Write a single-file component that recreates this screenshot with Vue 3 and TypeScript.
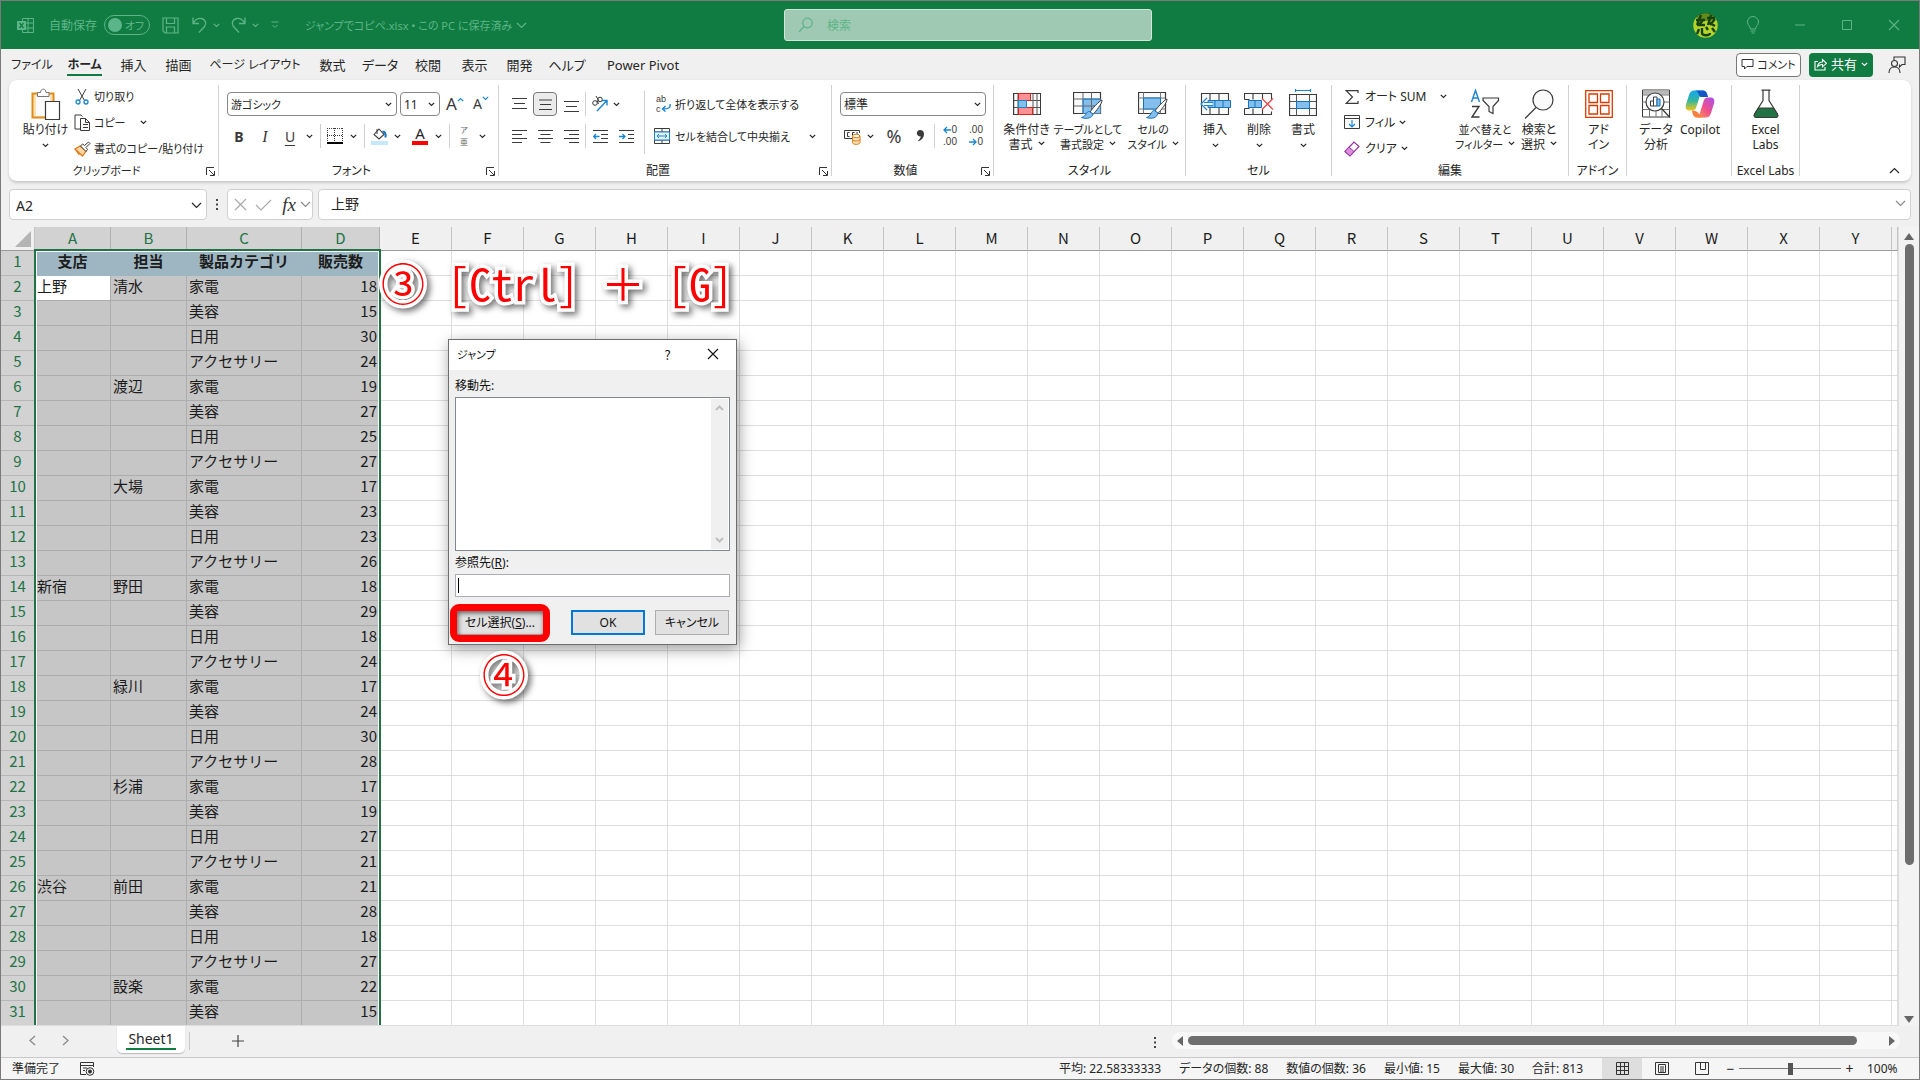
<script setup lang="ts">
import { h, ref } from 'vue'

type Glyph = [number, number, string]

const K = '#3b3a39'
const B = '#1a86d0'

const glyphs: Record<string, Glyph> = {
  excel: [17, 17, `<g fill="none" stroke="currentColor"><path d="M5.500 4V1.500h11v14h-11V13M11 1.500v14M5.500 6h11M9 11h7.500"/></g><rect y="4" width="9" height="9" fill="currentColor"/><path d="M2.500 6l4 5M6.500 6l-4 5" stroke="#107c41" stroke-width="1.300"/>`],
  save: [17, 17, `<g fill="none" stroke="currentColor" stroke-width="1.200"><path d="M1 1h15v15H3l-2-2z"/><path d="M4.500 1v5.500h8V1M4.500 16v-6h8v6"/></g>`],
  undo: [17, 18, `<path d="M2 1.500v6h6M2.200 7.200C4 4 7 2 10.500 2.500c4 .8 5.500 5 3 8L8 16.500" fill="none" stroke="currentColor" stroke-width="1.300"/>`],
  redo: [17, 18, `<path d="M15 1.500v6H9M14.800 7.200C13 4 10 2 6.500 2.500c-4 .8-5.500 5-3 8L9 16.500" fill="none" stroke="currentColor" stroke-width="1.300"/>`],
  custom: [8, 8, `<path d="M.5 1h7" stroke="currentColor"/><path d="M1.500 4L4 6.500 6.500 4" fill="none" stroke="currentColor"/>`],
  chev: [7, 5, `<path d="M.8.8L3.500 3.500 6.200.8" fill="none" stroke="currentColor" stroke-width="1.200"/>`],
  chevL: [11, 7, `<path d="M1 1l4.500 4.500L10 1" fill="none" stroke="currentColor" stroke-width="1.200"/>`],
  up: [11, 7, `<path d="M1 6l4.500-4.500L10 6" fill="none" stroke="currentColor" stroke-width="1.200"/>`],
  lens: [16, 16, `<g fill="none" stroke="currentColor" stroke-width="1.200"><circle cx="9.500" cy="6" r="4.800"/><path d="M6 9.500L1 15"/></g>`],
  bulb: [14, 18, `<g fill="none" stroke="currentColor"><path d="M4.500 13c0-3-3-3.500-3-7a5.500 5.500 0 0 1 11 0c0 3.500-3 4-3 7zM4.500 15h5M5.500 17h3"/></g>`],
  min: [12, 12, `<path d="M1 6h10" stroke="currentColor"/>`],
  max: [12, 12, `<path d="M1.500 1.500h9v9h-9z" fill="none" stroke="currentColor"/>`],
  close: [12, 12, `<path d="M1 1l10 10M11 1L1 11" stroke="currentColor" stroke-width="1.100"/>`],
  avatar: [25, 25, `<circle cx="12.500" cy="12.500" r="12.200" fill="#b4d42a"/><path d="M3 4a12.200 12.200 0 0 1 19 0l-4 4H7z" fill="#16420f" opacity=".5"/><g stroke="#16420f" stroke-width="2.400" fill="none"><path d="M3 7h9M8 2L4 12M4 12h8M11 6l-5 6M14 5h8M18 2l-3 10M15 9l7 4M22 6l-5 6M6 16l-2 5M9 15v5c0 3 8 3 8 0M13 14l2 3M19 15l3 4"/></g>`],
  comment: [13, 13, `<path d="M1 1.500h11v7H6L3.500 11V8.500H1z" fill="none" stroke="#333"/>`],
  share: [13, 13, `<g fill="none" stroke="#fff" stroke-width="1.100"><path d="M4 3.500H1v8.500h10V9"/><path d="M3.500 8.500C4 5.500 6 4 8.500 4V1.500l4 3.800-4 3.500V6.500C6.500 6.500 5 7 3.500 8.500z"/></g>`],
  person: [18, 18, `<g fill="none" stroke="#333" stroke-width="1.100"><path d="M6 4V1h11v7.500h-3L11.500 11V8.500"/><circle cx="6.500" cy="7.500" r="3"/><path d="M1 17c0-4 2-6 5.500-6s5.500 2 5.500 6"/></g>`],
  paste: [30, 32, `<path d="M1.500 5.500h21v24h-21z" fill="#fce3b4" stroke="#e08b1d" stroke-width="2"/><path d="M5 8h14v20H5z" fill="#fbfbfb"/><path d="M6.500 8.500V4.500h3C9.500 0 15 0 15 4.500h3v4z" fill="#fff" stroke="#777"/><path d="M14.500 13.500h14v18h-14z" fill="#fff" stroke="${K}" stroke-width="1.200"/>`],
  cut: [14, 16, `<path d="M3 0l6.500 11.500M11 0L4.500 11.500" stroke="${K}" fill="none"/><g fill="none" stroke="${B}" stroke-width="1.300"><circle cx="3" cy="13" r="2"/><circle cx="11" cy="13" r="2"/></g>`],
  copy: [17, 17, `<path d="M6 15H1V1h6l1.500 1.500" fill="none" stroke="${K}"/><path d="M6.500 4.500h5l4 4v8h-9zM11.500 4.500v4h4M9 10.500h5M9 13.500h5" fill="#fff" stroke="${K}"/>`],
  brush: [17, 16, `<path d="M1 8l5-3 6 5-3.500 5z" fill="#fbd6a4" stroke="#e07b17" stroke-width="1.300"/><path d="M3 10l3.500 4M1 8l4 6" stroke="#e07b17"/><path d="M6.500 5l2-2 2 1.500L14.500 1l1.500 1.500-4 4 1.500 2-1.500 2z" fill="#fff" stroke="${K}"/>`],
  launch: [9, 9, `<path d="M.5 8V.5H8M3 3l5 5M8.500 4v4.500H4" fill="none" stroke="#333"/>`],
  borders: [16, 16, `<g stroke="${K}" stroke-dasharray="1 1" fill="none"><path d="M0 .5h16M0 7.500h16M.5 0v14M7.500 0v14M15.500 0v14"/></g><path d="M0 15h16" stroke="#000" stroke-width="2"/>`],
  fill: [17, 17, `<path d="M3 6.500L8 1l5 5.500L8 11z" fill="#fff" stroke="${K}" stroke-width="1.100"/><path d="M6 1v5" stroke="${K}"/><path d="M11.500 3.500c2.500 0 3.500 2 3 6" stroke="#1573bd" stroke-width="2" fill="none"/><rect y="13" width="17" height="4" fill="#c5e9fb"/>`],
  alignTop: [15, 15, `<path d="M0 1.500h15M2 6.500h11M0 11.500h15" stroke="${K}"/>`],
  alignMid: [15, 15, `<path d="M1 3h13M2 7.500h11M1 12.500h13" stroke="${K}"/>`],
  alignBot: [15, 15, `<path d="M0 4.500h15M2 9.500h11M0 14.500h15" stroke="${K}"/>`],
  left: [15, 15, `<path d="M0 1.500h15M0 5.500h10M0 9.500h15M0 13.500h10" stroke="${K}"/>`],
  center: [15, 15, `<path d="M0 1.500h15M2.500 5.500h10M0 9.500h15M2.500 13.500h10" stroke="${K}"/>`],
  right: [15, 15, `<path d="M0 1.500h15M5 5.500h10M0 9.500h15M5 13.500h10" stroke="${K}"/>`],
  outdent: [15, 15, `<path d="M0 1.500h15M8 5.500h7M8 9.500h7M0 13.500h15" stroke="${K}"/><path d="M6.500 7.500h-6M3 5L.7 7.500 3 10" stroke="${B}" fill="none" stroke-width="1.300"/>`],
  indent: [15, 15, `<path d="M0 1.500h15M9 5.500h6M9 9.500h6M0 13.500h15" stroke="${K}"/><path d="M0 7.500h6M3.500 5L6 7.500 3.500 10" stroke="${B}" fill="none" stroke-width="1.300"/>`],
  orient: [18, 16, `<g fill="none" stroke="${K}"><circle cx="4" cy="7" r="2.300"/><path d="M6 4.500l1.500 3.500"/><circle cx="9" cy="3.500" r="2.300"/><path d="M5 0l3 5"/></g><path d="M6 15L15.500 5M11 4.500h5v5" stroke="${B}" stroke-width="1.400" fill="none"/>`],
  wrapArrow: [10, 8, `<path d="M9 0c1 4-2 5-7 5M4.500 2L1.500 5l3 2.500" stroke="${B}" stroke-width="1.400" fill="none"/>`],
  merge: [16, 16, `<path d="M.5.500h15v15H.5zM.5 4h15M.5 12h15M8 .5V4M8 12v3.500" fill="none" stroke="${K}"/><path d="M.5 4h15v8H.5z" fill="#e6f3fc" stroke="${B}"/><path d="M3 8h10M5 6L3 8l2 2M11 6l2 2-2 2" fill="none" stroke="${B}"/>`],
  money: [17, 17, `<path d="M9 10.500H.5v-8h15V5" fill="none" stroke="${K}"/><path d="M5.500 4.500h-2v4h2M8.500 8V4.500h2M13 4v2" fill="none" stroke="${K}"/><path d="M8.500 8v6.500c0 2.500 7.500 2.500 7.500 0V8z" fill="#fbe0bd" stroke="#e07b17"/><ellipse cx="12.250" cy="8" rx="3.700" ry="1.700" fill="#fff" stroke="#e07b17"/><path d="M8.500 11.500c0 2 7.500 2 7.500 0" fill="none" stroke="#e07b17"/>`],
  comma: [9, 14, `<path d="M4 1a3.200 3.200 0 1 0 .8 6.300C4.500 9.500 3 11 1.500 12.500 5.500 11.500 8 8.500 8 5 8 2.500 6.500 1 4 1z" fill="${K}"/>`],
  arrL: [8, 8, `<path d="M8 4H1M4 1L1 4l3 3" fill="none" stroke="${B}" stroke-width="1.300"/>`],
  arrR: [8, 8, `<path d="M0 4h7M4 1l3 3-3 3" fill="none" stroke="${B}" stroke-width="1.300"/>`],
  cond: [28, 28, `<path d="M.5 3.500h27v21H.5zM.5 10.500h27M.5 17.500h27M5 3.500v21M20 3.500v21M24 3.500v21" fill="#fafafa" stroke="#555"/><path d="M.6 3.500v21h27v-21z" fill="none" stroke="${K}" stroke-width="1.200"/><path d="M5.500 3.500h12v7h-12zM5.500 17.500h14v7h-14z" fill="#ff9094" stroke="#e0201b"/><path d="M5.500 10.500h8v7h-8z" fill="#83beec" stroke="${B}"/>`],
  tableFmt: [31, 30, `<path d="M.5 3.500h27v21H.5z" fill="#fafafa" stroke="${K}" stroke-width="1.200"/><path d="M10 10h17.500v14.500H10z" fill="#83beec"/><path d="M.5 10h27M.5 17h27M10 3.500v21M18.500 3.500v21" stroke="#666"/><path d="M10 10h17.500M10 10v14.500" stroke="${B}"/><path d="M29 11c-3 1-10 9-12 12l3 2.500C23 22 29 15 29 11z" fill="#fff" stroke="${K}"/><path d="M16.500 22.500c-4 0-3 5-8 6 5 2 11 .5 11.500-3.500z" fill="#83beec" stroke="#1573bd"/>`],
  cellStyle: [31, 30, `<path d="M.5 3.500h27v21H.5z" fill="#fafafa" stroke="${K}" stroke-width="1.200"/><path d="M.5 9h27M.5 20h27M5.500 3.500v21M22.500 3.500v21" stroke="#777"/><path d="M5.500 9h17v11h-17z" fill="#83beec" stroke="#1573bd"/><path d="M29 10c-3 1-10 9-12 12l3 2.500C23 21 29 14 29 10z" fill="#fff" stroke="${K}"/><path d="M16.500 21.500c-4 0-3 6-8 7 5 2 11 0 11.500-4.500z" fill="#83beec" stroke="#1573bd"/>`],
  insert: [32, 28, `<path d="M2.500 3.500h27v21h-27zM11 3.500v21M20 3.500v21" fill="#fafafa" stroke="${K}" stroke-width="1.100"/><path d="M9 10.500h22.500v7H9zM16 10.500v7M24 10.500v7" fill="#83beec" stroke="#1573bd"/><path d="M7.500 7.500L1.500 14l6 6.500v-4.700h6v-3.600h-6z" fill="#fff"/><path d="M14 12.500H5M14 15.500H5M8 8l-6 6 6 6" fill="none" stroke="${B}" stroke-width="1.200"/>`],
  remove: [30, 28, `<path d="M.5 9.500v-6h27v6M.5 18.500v6h27v-3M9 3.500v6M18.500 3.500v6M9 18.500v6M18.500 18.500v6M.5 9.500h5M.5 18.500h5" fill="#fafafa" stroke="${K}" stroke-width="1.100"/><path d="M4.500 10.500h13v7h-13zM11 10.500v7" fill="#83beec" stroke="#1573bd"/><path d="M18 8.500l11 11M29 8.500l-11 11" stroke="#f0474a" stroke-width="1.300"/>`],
  format: [28, 30, `<path d="M6.500 1.500h15M6.500 0v3M21.500 0v3" stroke="${B}" stroke-width="1.200"/><path d="M.5 5.500h27v21H.5z" fill="#fafafa" stroke="${K}" stroke-width="1.200"/><path d="M.5 12.500h27M.5 19.500h27M7.500 5.500v21M20.500 5.500v21" stroke="#555"/><path d="M7.500 12.500h13v7h-13z" fill="#83beec" stroke="#1573bd"/>`],
  sum: [14, 14, `<path d="M13 3V.7H1.200L7.500 7l-6.300 6.300H13V11" fill="none" stroke="${K}" stroke-width="1.200"/>`],
  fillDown: [16, 15, `<path d="M.5.500h15v13H.5zM.5 3.500h15" fill="none" stroke="${K}"/><path d="M8 5v7M5 9l3 3 3-3" fill="none" stroke="${B}" stroke-width="1.200"/>`],
  eraser: [16, 16, `<path d="M1 10.500L10 1l5 4.500L6 15z" fill="#fff" stroke="#9a2fa3" stroke-width="1.200"/><path d="M1 10.500L5 6l5 4.500L6 15z" fill="#d98fdd" stroke="#9a2fa3"/>`],
  sort: [30, 30, `<g fill="none" stroke-width="1.400"><path d="M1.500 13L5.500 1.500 9.500 13M3 9h5" stroke="${B}"/><path d="M2 17.500h7L2 28h7.500" stroke="${K}"/><path d="M13 9h15.500v2.500L23 17.500v7l-4-2v-5L13 11.500z" stroke="${K}" fill="#fafafa" stroke-width="1.200"/></g>`],
  find: [30, 30, `<g fill="none" stroke="${K}" stroke-width="1.200"><circle cx="19" cy="11" r="10" fill="#fafafa"/><path d="M12 18.500L1 29.500"/></g>`],
  addin: [28, 28, `<g fill="none" stroke="#d83b01" stroke-width="1.300"><path d="M.7.700h26.600v26.600H.7zM4 4h8.500v8.500H4zM15.500 4H24v8.500h-8.500zM4 15.500h8.500V24H4zM15.500 15.500H24V24h-8.500z"/></g>`],
  analyze: [29, 29, `<path d="M.5.500h27v27H.5z" fill="#fff" stroke="${K}"/><path d="M1 1h26v4H1z" fill="#b8b8b8"/><path d="M.5 5.500h27M.5 12.500h27M.5 20h27M7.500 20v7.500M14 20v7.500M20 20v7.500" stroke="#777"/><circle cx="13" cy="12.500" r="9" fill="#f5f9fd" stroke="${K}" stroke-width="1.200"/><path d="M19.500 19l8.500 9" stroke="${K}" stroke-width="1.300"/><path d="M8.500 11.500h3v5h-3zM11.500 7.500h3.500v9h-3.500z" fill="#fff" stroke="${K}"/><path d="M15 9.500h3v7h-3z" fill="#83beec" stroke="#1573bd"/>`],
  copilot: [30, 28, `<defs><linearGradient id="cpa" x1="0" y1="0" x2="0" y2="1"><stop offset="0" stop-color="#1aa7ee"/><stop offset=".5" stop-color="#2fb7a0"/><stop offset="1" stop-color="#f2c517"/></linearGradient><linearGradient id="cpb" x1="1" y1="0" x2="0" y2="1"><stop offset="0" stop-color="#a94ef0"/><stop offset=".5" stop-color="#ef4f8c"/><stop offset="1" stop-color="#ffa14a"/></linearGradient></defs><path d="M9 .5h11c-3 0-4 2-5 5l-3.500 11c-.6 2.500-2 4-4.500 4H4.500C1 20.500 0 18 1 14.500l3-9.500C5 2 6.500.500 9 .5z" fill="url(#cpa)"/><path d="M9 .5h9c2.500 0 3.500 1.500 4.200 3.500l.9 3H17c-2 0-2.500-.5-3-2C13.300 2.500 12 .5 9 .5z" fill="#1556c4"/><path d="M21 27.500H10c3 0 4-2 5-5l3.500-11c.6-2.500 2-4 4.500-4h2.500c3.500 0 4.500 2.500 3.500 6l-3 9.500c-1 3-2.500 4.500-5 4.500z" fill="url(#cpb)"/><path d="M21 27.500h-9c-2.500 0-3.500-1.500-4.200-3.500l-1-3.500C11 20.500 13 22 14 24c.8 2 3 3.500 7 3.500z" fill="#f5803e"/>`],
  flask: [26, 29, `<path d="M8.500.600h9M10 1v10L1.500 24.500c-1 2 0 3.500 2 3.500h19c2 0 3-1.500 2-3.500L16 11V1" fill="#fff" stroke="${K}" stroke-width="1.200"/><path d="M5.500 18.500h15l4 6.500c.7 1.500 0 3-2 3h-19c-2 0-2.700-1.500-2-3z" fill="#217346" stroke="${K}"/>`],
  tick: [17, 12, `<path d="M1 6l5 5L16 1" fill="none" stroke="#aaa" stroke-width="1.200"/>`],
  cross: [13, 13, `<path d="M1 1l11 11M12 1L1 12" fill="none" stroke="#aaa" stroke-width="1.200"/>`],
  dots: [3, 12, `<path d="M0 0h2v2H0zM0 4.500h2v2H0zM0 9h2v2H0z" fill="#444"/>`],
  prev: [7, 11, `<path d="M6 1L1 5.500 6 10" fill="none" stroke="#8a8a8a" stroke-width="1.300"/>`],
  next: [7, 11, `<path d="M1 1l5 4.500L1 10" fill="none" stroke="#8a8a8a" stroke-width="1.300"/>`],
  plus: [12, 12, `<path d="M6 0v12M0 6h12" stroke="#444" stroke-width="1.200"/>`],
  triL: [7, 10, `<path d="M7 0v10L1 5z" fill="#666"/>`],
  triR: [7, 10, `<path d="M0 0v10l6-5z" fill="#666"/>`],
  triU: [10, 8, `<path d="M0 8h10L5 1z" fill="#666"/>`],
  triD: [10, 8, `<path d="M0 0h10L5 7z" fill="#666"/>`],
  macro: [15, 14, `<g fill="none" stroke="#333"><path d="M6 12.500H.5v-12h13V5M.5 3.500h13M3 6h4M3 8.500h2"/><circle cx="10" cy="9.500" r="3.800"/></g><circle cx="10" cy="9.500" r="2" fill="#333"/>`],
  viewGrid: [13, 13, `<path d="M.5.500h12v12H.5zM.5 4.500h12M.5 8.500h12M4.500.5v12M8.500.5v12" fill="none" stroke="#333"/>`],
  viewPage: [14, 13, `<path d="M.5.500h13v12H.5zM3.500 2.500h7v8h-7zM5 5h4M5 7h4M5 9h4" fill="none" stroke="#333"/>`],
  viewBreak: [14, 13, `<path d="M.5 12.500V.5h13v12zM5.500.5v7h5V.5" fill="none" stroke="#333"/>`],
  corner: [16, 16, `<path d="M16 0v16H0z" fill="#b4b4b4"/>`],
  listUp: [9, 6, `<path d="M1 5l3.500-3.500L8 5" fill="none" stroke="#bfbfbf" stroke-width="2"/>`],
  listDn: [9, 6, `<path d="M1 1l3.500 3.500L8 1" fill="none" stroke="#bfbfbf" stroke-width="2"/>`],
}

const Ic = (p: { n: string }) => {
  const [w, ht, body] = glyphs[p.n]
  return h('svg', { class: 'ic', width: w, height: ht, viewBox: `0 0 ${w} ${ht}`, innerHTML: body, 'aria-hidden': 'true' })
}
Ic.props = ['n']

const tabs = ['ファイル', 'ホーム', '挿入', '描画', 'ページ レイアウト', '数式', 'データ', '校閲', '表示', '開発', 'ヘルプ', 'Power Pivot']
const letters = 'ABCDEFGHIJKLMNOPQRSTUVWXY'.split('')
const headings = ['支店', '担当', '製品カテゴリ', '販売数']
const categories = ['家電', '美容', '日用', 'アクセサリー']
const branches: Record<number, string> = { 0: '上野', 12: '新宿', 24: '渋谷' }
const staff = ['清水', '渡辺', '大場', '野田', '緑川', '杉浦', '前田', '設楽']
const sales = [18, 15, 30, 24, 19, 27, 25, 27, 17, 23, 23, 26, 18, 29, 18, 24, 17, 24, 30, 28, 17, 19, 27, 21, 21, 28, 18, 27, 22, 15]
const rows = sales.map((n, i) => [branches[i] ?? '', i % 4 === 0 ? staff[i / 4] : '', categories[i % 4], String(n)])
const stats = ['平均: 22.58333333', 'データの個数: 88', '数値の個数: 36', '最小値: 15', '最大値: 30', '合計: 813']
const address = ref('A2')
const content = ref('上野')
const target = ref('')
const zoom = ref(50)
</script>

<template>
  <div class="window">
    <header class="title">
      <Ic n="excel" />
      <label class="auto">自動保存
        <span class="toggle"><input type="checkbox" aria-label="自動保存" /><i></i>オフ</span>
      </label>
      <button class="q" aria-label="保存"><Ic n="save" /></button>
      <button class="q undo" aria-label="元に戻す"><Ic n="undo" /><Ic n="chev" /></button>
      <button class="q redo" aria-label="やり直し"><Ic n="redo" /><Ic n="chev" /></button>
      <button class="q" aria-label="カスタマイズ"><Ic n="custom" /></button>
      <button class="fname">ジャンプでコピペ.xlsx • この PC に保存済み <Ic n="chevL" /></button>
      <label class="search"><Ic n="lens" /><input type="text" placeholder="検索" aria-label="検索" /></label>
      <div class="sys">
        <button aria-label="アカウント"><Ic n="avatar" /></button>
        <button aria-label="ヒント"><Ic n="bulb" /></button>
        <button aria-label="最小化"><Ic n="min" /></button>
        <button aria-label="最大化"><Ic n="max" /></button>
        <button aria-label="閉じる"><Ic n="close" /></button>
      </div>
    </header>

    <div class="tabrow">
      <nav class="tabs">
        <button v-for="t in tabs" :key="t" :class="{ on: t === 'ホーム' }"><span>{{ t }}</span></button>
      </nav>
      <button class="comment"><Ic n="comment" />コメント</button>
      <button class="share"><Ic n="share" />共有<Ic n="chev" /></button>
      <button class="person" aria-label="プレゼンス"><Ic n="person" /></button>
    </div>

    <section class="ribbon">
      <div class="group clip">
        <div class="body">
          <button class="big"><Ic n="paste" /><span>貼り付け</span><Ic n="chev" /></button>
          <div class="stack">
            <button><i class="slot"><Ic n="cut" /></i>切り取り</button>
            <button><i class="slot"><Ic n="copy" /></i>コピー<Ic n="chev" class="far" /></button>
            <button><i class="slot"><Ic n="brush" /></i>書式のコピー/貼り付け</button>
          </div>
        </div>
        <div class="cap more">クリップボード<button class="launch" aria-label="クリップボードの設定"><Ic n="launch" /></button></div>
      </div>

      <div class="group font">
        <div class="body rows">
          <div class="line">
            <span class="combo name"><select aria-label="フォント"><option>游ゴシック</option></select><Ic n="chev" /></span>
            <span class="combo size"><select aria-label="フォント サイズ"><option>11</option></select><Ic n="chev" /></span>
            <button class="t grow">A<Ic n="chev" /></button>
            <button class="t shrink">A<Ic n="chev" /></button>
          </div>
          <div class="line">
            <button class="t b">B</button><button class="t i">I</button><button class="t u">U</button><button class="dd" aria-label="下線"><Ic n="chev" /></button>
            <i class="sep"></i>
            <button class="n" aria-label="罫線"><Ic n="borders" /></button><button class="dd" aria-label="罫線の種類"><Ic n="chev" /></button>
            <i class="sep"></i>
            <button class="n" aria-label="塗りつぶし"><Ic n="fill" /></button><button class="dd" aria-label="塗りつぶしの色"><Ic n="chev" /></button>
            <button class="n color"><span>A</span></button><button class="dd" aria-label="フォントの色"><Ic n="chev" /></button>
            <i class="sep"></i>
            <button class="n ruby"><span>ア</span><span>亜</span></button><button class="dd" aria-label="ふりがな"><Ic n="chev" /></button>
          </div>
        </div>
        <div class="cap more">フォント<button class="launch" aria-label="フォントの設定"><Ic n="launch" /></button></div>
      </div>

      <div class="group align">
        <div class="body">
          <div class="rows">
            <div class="line">
              <button class="w" aria-label="上揃え"><Ic n="alignTop" /></button><button class="w sel" aria-label="上下中央揃え"><Ic n="alignMid" /></button><button class="w" aria-label="下揃え"><Ic n="alignBot" /></button>
              <i class="bar"></i>
              <button class="w" aria-label="方向"><Ic n="orient" /></button><button class="dd near" aria-label="方向の種類"><Ic n="chev" /></button>
            </div>
            <div class="line">
              <button class="w" aria-label="左揃え"><Ic n="left" /></button><button class="w" aria-label="中央揃え"><Ic n="center" /></button><button class="w" aria-label="右揃え"><Ic n="right" /></button>
              <i class="bar"></i>
              <button class="w" aria-label="インデントを減らす"><Ic n="outdent" /></button><button class="w" aria-label="インデントを増やす"><Ic n="indent" /></button>
            </div>
          </div>
          <div class="rows wrap">
            <button><i class="slot abc"><span>ab</span><span>c<Ic n="wrapArrow" /></span></i>折り返して全体を表示する</button>
            <button><i class="slot"><Ic n="merge" /></i>セルを結合して中央揃え<Ic n="chev" class="end" /></button>
          </div>
        </div>
        <div class="cap more">配置<button class="launch" aria-label="配置の設定"><Ic n="launch" /></button></div>
      </div>

      <div class="group num">
        <div class="body rows">
          <div class="line"><span class="combo fmt"><select aria-label="表示形式"><option>標準</option></select><Ic n="chev" /></span></div>
          <div class="line">
            <button class="n" aria-label="通貨"><Ic n="money" /></button><button class="dd" aria-label="通貨の種類"><Ic n="chev" /></button>
            <button class="w pct">%</button><button class="w" aria-label="桁区切り"><Ic n="comma" /></button>
            <i class="bar"></i>
            <button class="w dec"><span><Ic n="arrL" />0</span><span>.00</span></button>
            <button class="w dec"><span>.00</span><span><Ic n="arrR" />0</span></button>
          </div>
        </div>
        <div class="cap more">数値<button class="launch" aria-label="数値の設定"><Ic n="launch" /></button></div>
      </div>

      <div class="group style">
        <div class="body">
          <button class="big"><Ic n="cond" /><span>条件付き<br />書式 <Ic n="chev" /></span></button>
          <button class="big c68"><Ic n="tableFmt" /><span>テーブルとして<br />書式設定 <Ic n="chev" /></span></button>
          <button class="big c60"><Ic n="cellStyle" /><span>セルの<br />スタイル <Ic n="chev" /></span></button>
        </div>
        <div class="cap">スタイル</div>
      </div>

      <div class="group cells">
        <div class="body">
          <button class="big c44"><Ic n="insert" /><span>挿入</span><Ic n="chev" /></button>
          <button class="big c44"><Ic n="remove" /><span>削除</span><Ic n="chev" /></button>
          <button class="big c44"><Ic n="format" /><span>書式</span><Ic n="chev" /></button>
        </div>
        <div class="cap">セル</div>
      </div>

      <div class="group edit">
        <div class="body">
          <div class="stack">
            <button><i class="slot"><Ic n="sum" /></i>オート SUM<Ic n="chev" class="end" /></button>
            <button><i class="slot"><Ic n="fillDown" /></i>フィル <Ic n="chev" /></button>
            <button><i class="slot"><Ic n="eraser" /></i>クリア <Ic n="chev" /></button>
          </div>
          <button class="big c60"><Ic n="sort" /><span>並べ替えと<br />フィルター <Ic n="chev" /></span></button>
          <button class="big c44"><Ic n="find" /><span>検索と<br />選択 <Ic n="chev" /></span></button>
        </div>
        <div class="cap">編集</div>
      </div>

      <div class="group addin">
        <div class="body"><button class="big"><Ic n="addin" /><span>アド<br />イン</span></button></div>
        <div class="cap">アドイン</div>
      </div>

      <div class="group ana">
        <div class="body">
          <button class="big c44"><Ic n="analyze" /><span>データ<br />分析</span></button>
          <button class="big c44"><Ic n="copilot" /><span>Copilot</span></button>
        </div>
        <div class="cap"></div>
      </div>

      <div class="group labs">
        <div class="body"><button class="big"><Ic n="flask" /><span>Excel<br />Labs</span></button></div>
        <div class="cap">Excel Labs</div>
      </div>
      <button class="collapse" aria-label="リボンを折りたたむ"><Ic n="up" /></button>
    </section>

    <div class="formula">
      <div class="box namebox"><input v-model="address" aria-label="名前ボックス" /><Ic n="chevL" /></div>
      <i class="grip"><Ic n="dots" /></i>
      <div class="box fx">
        <button aria-label="キャンセル"><Ic n="cross" /></button><button aria-label="入力"><Ic n="tick" /></button>
        <button class="f">fx</button><Ic n="chevL" class="dim" />
      </div>
      <div class="box value"><input v-model="content" aria-label="数式バー" /><Ic n="chevL" class="dim" /></div>
    </div>

    <main class="sheet">
      <div class="grid">
        <table>
          <colgroup>
            <col class="k0" /><col class="k1" /><col class="k1" /><col class="k3" /><col class="k4" />
            <col v-for="n in 21" :key="n" class="kn" /><col />
          </colgroup>
          <thead>
            <tr>
              <th class="nw"><Ic n="corner" /></th>
              <th v-for="(l, i) in letters" :key="l" :class="{ s: i < 4 }" scope="col">{{ l }}</th>
              <th></th>
            </tr>
          </thead>
          <tbody>
            <tr class="head">
              <th scope="row">1</th>
              <td v-for="t in headings" :key="t" class="s">{{ t }}</td>
              <td v-for="n in 22" :key="n"></td>
            </tr>
            <tr v-for="(r, i) in rows" :key="i">
              <th scope="row">{{ i + 2 }}</th>
              <td v-for="(t, j) in r" :key="j" :class="['s', { active: i === 0 && j === 0, r: j === 3 }]">{{ t }}</td>
              <td v-for="n in 22" :key="n"></td>
            </tr>
          </tbody>
        </table>
        <div class="range"></div>
      </div>
      <div class="vscroll"><Ic n="triU" /><i></i><Ic n="triD" /></div>
    </main>

    <div class="sheets">
      <button class="pg" aria-label="前のシート"><Ic n="prev" /></button>
      <button class="pg" aria-label="次のシート"><Ic n="next" /></button>
      <button class="stab"><span>Sheet1</span></button>
      <i class="tsep"></i>
      <button class="add" aria-label="新しいシート"><Ic n="plus" /></button>
      <Ic n="dots" class="hgrip" />
      <div class="hscroll"><Ic n="triL" /><i></i><Ic n="triR" /></div>
    </div>

    <footer class="status">
      <span>準備完了</span>
      <button class="mac" aria-label="マクロの記録"><Ic n="macro" /></button>
      <div class="stats"><span v-for="s in stats" :key="s">{{ s }}</span></div>
      <button class="view on" aria-label="標準"><Ic n="viewGrid" /></button>
      <button class="view" aria-label="ページ レイアウト"><Ic n="viewPage" /></button>
      <button class="view" aria-label="改ページ プレビュー"><Ic n="viewBreak" /></button>
      <button class="z">−</button>
      <input v-model="zoom" type="range" aria-label="ズーム" />
      <button class="z">+</button>
      <span class="pc">100%</span>
    </footer>

    <form class="dialog" role="dialog" aria-label="ジャンプ" @submit.prevent>
      <div class="dt"><span>ジャンプ</span><button type="button">?</button><button type="button" aria-label="閉じる"><Ic n="close" /></button></div>
      <div class="db">
        <label for="dest">移動先:</label>
        <div id="dest" class="list" role="listbox"><div class="ls"><Ic n="listUp" /><Ic n="listDn" /></div></div>
        <label for="refto">参照先(<u>R</u>):</label>
        <div class="ref"><i></i><input id="refto" v-model="target" /></div>
        <div class="acts">
          <button type="button" class="special">セル選択(<u>S</u>)...</button>
          <button class="ok">OK</button>
          <button type="button">キャンセル</button>
        </div>
      </div>
    </form>

    <div class="mark m3">③ [Ctrl] <span>＋</span> [G]</div>
    <div class="mark m4">④</div>
    <div class="ring"></div>
  </div>
</template>

<style>
body { margin: 0; overflow: hidden; }
.ic { display: block; flex: none; }
</style>

<style scoped>
.window { position: relative; display: flex; flex-direction: column; box-sizing: border-box; width: 100%; height: 100vh; border: 1px solid #7a7a7a; background: #f0f0f0; color: #262626; font: 12px/15px "Noto Sans", "Noto Sans CJK JP", sans-serif; font-feature-settings: "palt"; white-space: nowrap; overflow: hidden; }
.window * { box-sizing: border-box; }
button, input, select { margin: 0; padding: 0; border: 0; background: none; font: inherit; color: inherit; outline: none; }
button { display: flex; align-items: center; justify-content: center; }
i { font-style: normal; }

.title { flex: none; display: flex; align-items: center; height: 48px; padding-left: 16px; background: #107c41; color: #5cb588; }
.auto { display: flex; align-items: center; gap: 7px; margin-left: 15px; }
.toggle { position: relative; display: flex; align-items: center; justify-content: flex-end; width: 46px; height: 20px; padding-right: 5px; border: 1px solid #5cb588; border-radius: 10px; font-size: 11px; }
.toggle input { position: absolute; inset: 0; opacity: 0; }
.toggle i { position: absolute; left: 3px; top: 2px; width: 14px; height: 14px; border-radius: 7px; background: #5cb588; }
.q { gap: 5px; margin-left: 12px; }
.redo { margin-left: 10px; }
.fname { gap: 4px; margin-left: 26px; font-size: 11px; }
.search { position: absolute; left: 50%; top: 8px; display: flex; align-items: center; gap: 13px; width: 368px; height: 32px; margin-left: -176px; padding-left: 13px; border: 1px solid #cfe6d9; border-radius: 3px; background: #a0c9b3; }
.search input::placeholder { color: #5cb588; opacity: 1; }
.sys { display: flex; margin: 0 2px 0 auto; }
.sys button { width: 47px; }

.tabrow { flex: none; display: flex; align-items: center; height: 31px; padding: 0 13px 0 5px; }
.tabs { display: grid; grid-template-columns: 52px 53px 45px 45px 108px 47px 48px 48px 45px 45px 50px 102px; margin-right: auto; }
.tabs button { font-size: 13px; height: 31px; align-items: flex-start; }
.tabs button:first-child, .tabs button:nth-child(2), .tabs button:nth-child(5) { font-size: 12px; }
.tabs span { display: block; height: 27px; line-height: 32px; }
.tabs .on span { font-weight: bold; border-bottom: 2px solid #107c41; }
.comment, .share { height: 24px; border-radius: 4px; }
.comment { gap: 3px; width: 65px; border: 1px solid #777; background: #fff; font-size: 11px; }
.share { gap: 4px; width: 64px; margin-left: 8px; background: #107c41; color: #fff; font-size: 13px; }
.person { margin-left: 15px; }

.ribbon { flex: none; display: flex; height: 102px; margin: 0 8px; padding-top: 5px; border-radius: 8px; background: #fff; border-bottom: 1px solid #ccc; box-shadow: 0 1px 3px rgba(0, 0, 0, .15); }
.group { flex: none; display: flex; flex-direction: column; height: 91px; border-right: 1px solid #d0d0d0; }
.body { flex: none; display: flex; height: 79px; }
.cap { position: relative; height: 12px; text-align: center; line-height: 14px; }
.more { padding-right: 14px; }
.launch { position: absolute; right: 3px; top: 3px; }
.clip { width: 210px; }
.clip .cap { font-size: 11px; }
.font { width: 280px; }
.align { width: 333px; }
.num { width: 162px; }
.style { width: 192px; }
.cells { width: 146px; }
.edit { width: 237px; }
.addin { width: 58px; }
.ana { width: 105px; }
.labs { width: 68px; }
.collapse { align-self: flex-end; margin: 0 11px 7px auto; }
.big { flex: none; flex-direction: column; justify-content: flex-start; align-items: center; width: 53px; padding-top: 3px; line-height: 15px; text-align: center; }
.big > .ic:first-child { height: 32px; margin-bottom: 2px; }
.big > .ic:last-child { margin-top: 6px; }
.big span .ic { display: inline-block; margin: 0 0 3px 2px; }
.c68 { width: 70px; font-size: 11px; }
.c60 { width: 60px; font-size: 11px; }
.c44 { width: 44px; }
.clip .body { padding-left: 10px; }
.style .body { padding-left: 6px; }
.cells .body { padding-left: 7px; }
.addin .body { padding-left: 3px; }
.ana .body { padding-left: 7px; }
.labs .body { padding-left: 7px; }
.stack { display: flex; flex-direction: column; }
.stack button { justify-content: flex-start; height: 26px; gap: 3px; padding-bottom: 3px; }
.slot { flex: none; display: flex; justify-content: center; width: 18px; }
.far { margin-left: 11px; }
.edit .stack { width: 123px; padding-left: 11px; }
.edit .stack button { gap: 4px; }
.end { margin-left: auto; }
.edit .end { margin-right: 8px; }
.clip .stack { padding-left: 1px; font-size: 11px; }
.edit .c44 { width: 48px; }

.rows { display: flex; flex-direction: column; gap: 8px; padding-top: 7px; }
.line { display: flex; align-items: center; height: 24px; }
.font .line, .num .line { padding-left: 7px; }
.combo { position: relative; display: block; height: 24px; border: 1px solid #868686; border-radius: 4px; background: #fff; }
.combo select { display: block; width: 100%; height: 22px; padding-left: 3px; appearance: none; }
.combo .ic { position: absolute; right: 4px; top: 9px; pointer-events: none; }
.name { width: 170px; margin-left: 1px; }
.name select { font-size: 11px; }
.size { width: 40px; margin-left: 3px; }
.fmt { width: 146px; margin-left: 1px; }
.t { width: 26px; font-size: 14px; color: #3b3a39; }
.grow, .shrink { align-items: flex-start; margin-left: 2px; font-size: 17px; line-height: 20px; }
.shrink { font-size: 14px; margin-left: 0; }
.grow .ic { transform: rotate(180deg); color: #1a86d0; margin-top: 3px; }
.shrink .ic { color: #1a86d0; margin-top: 2px; }
.b { font-weight: bold; }
.t.i { font-family: "Liberation Serif", serif; font-style: italic; font-size: 16px; }
.t.u { width: 24px; text-decoration: underline; text-underline-offset: 3px; }
.dd { width: 14px; height: 24px; }
.n { width: 22px; height: 24px; }
.sep { width: 1px; height: 24px; margin: 0 3px 0 4px; background: #d0d0d0; }
.bar { width: 1px; height: 24px; margin: 0 1px; background: #d0d0d0; }
.color { margin-left: 5px; }
.color span { width: 16px; height: 18px; border-bottom: 4px solid #f00; font-size: 15px; line-height: 13px; text-align: center; }
.ruby { flex-direction: column; color: #666; font-family: "Noto Sans CJK JP", sans-serif; font-size: 8px; line-height: 12px; }
.w { width: 26px; height: 24px; }
.w.sel { width: 24px; margin: 0 1px; border: 1px solid #777; border-radius: 4px; background: #ebebeb; }
.near { margin-left: -4px; }
.align .line { padding-left: 7px; }
.wrap { width: 180px; height: 63px; margin: 6px 0 0 5px; padding: 1px 0 0 8px; border-left: 1px solid #d0d0d0; font-size: 11px; }
.wrap button { justify-content: flex-start; height: 24px; gap: 4px; }
.wrap .end { margin-right: 8px; }
.abc { flex-direction: column; padding-left: 3px; font-family: "Liberation Sans", sans-serif; font-size: 9px; line-height: 10px; color: #3b3a39; }
.abc span { display: flex; }
.pct { font-size: 18px; color: #3b3a39; margin-left: 4px; }
.num .n { margin-left: 2px; }
.dec { flex-direction: column; align-items: flex-end; padding-right: 5px; font-family: "Liberation Sans", sans-serif; font-size: 10px; line-height: 12px; color: #3b3a39; }
.dec span { display: flex; align-items: center; }

.formula { flex: none; display: flex; align-items: center; height: 45px; padding: 0 8px; }
.box { display: flex; align-items: center; height: 31px; border: 1px solid #d0d0d0; border-radius: 4px; background: #fff; }
.namebox { width: 198px; padding: 2px 4px 0 6px; }
.namebox input { flex: 1; min-width: 0; font-size: 14px; height: 20px; }
.grip { display: flex; justify-content: center; width: 20px; }
.fx { width: 86px; padding-left: 6px; }
.fx button { margin-right: 8px; }
.fx .f { width: 18px; margin-right: 2px; font: italic 19px/20px "Liberation Serif", serif; color: #333; }
.dim { color: #8a8a8a; }
.value { flex: 1; margin-left: 5px; padding: 0 4px 3px 12px; }
.value input { flex: 1; font: 14px/20px "Noto Sans CJK JP", sans-serif; font-feature-settings: normal; }

.sheet { flex: 1; min-height: 0; display: flex; }
.grid { position: relative; flex: 1; min-width: 0; overflow: hidden; background: #fff; border-right: 1px solid #ddd; border-bottom: 1px solid #ddd; }
table { width: 100%; table-layout: fixed; border-collapse: separate; border-spacing: 0; font: 15px/20px "Noto Sans CJK JP", sans-serif; font-feature-settings: normal; color: #1c1c1c; }
.k0 { width: 34px; }
.k1 { width: 76px; }
.k3 { width: 115px; }
.k4 { width: 78px; }
.kn { width: 72px; }
th, td { height: 25px; padding: 0 2px; border-right: 1px solid #dedede; border-bottom: 1px solid #dedede; overflow: hidden; text-align: left; vertical-align: top; }
th { padding: 0; font-weight: normal; text-align: center; }
thead th { height: 24px; border-color: #c4c4c4; border-bottom-color: #9a9a9a; background: #f0f0f0; line-height: 21px; }
thead th.s { background: #d2d2d2; border-right-color: #b0b0b0; color: #217346; }
.nw .ic { margin: 4px 0 0 14px; }
tbody th { background: #d2d2d2; border-color: #b6b6b6; color: #217346; }
td.s { background: #c6c6c6; border-color: #adadad; }
td.active { background: #fff; }
td.r { text-align: right; }
.head td { text-align: center; font-weight: bold; }
.head td.s { background: #9eb6c2; border-color: #9eb6c2; }
.range { position: absolute; left: 33px; top: 22px; width: 347px; bottom: -4px; border: 2px solid #217346; box-shadow: inset 0 0 0 1px #fff; }
.vscroll { flex: none; display: flex; flex-direction: column; align-items: center; width: 20px; padding: 5px 0 2px; background: #f3f3f3; }
.vscroll i { width: 9px; height: 621px; margin: 4px 0 auto; border-radius: 5px; background: #6e6e6e; }

.sheets { flex: none; display: flex; align-items: center; height: 32px; padding: 0 19px 2px 15px; border-bottom: 1px solid #c8c8c8; }
.pg { width: 33px; height: 24px; }
.stab { align-self: flex-start; align-items: flex-start; width: 68px; height: 27px; margin-left: 35px; border-radius: 0 0 5px 5px; background: #fff; box-shadow: 0 1px 1px #bbb; font-size: 14px; }
.stab span { height: 24px; padding: 0 2px; border-bottom: 2px solid #107c41; line-height: 25px; }
.tsep { width: 1px; height: 18px; margin-left: 4px; background: #c8c8c8; }
.add { width: 24px; margin-left: 36px; }
.hgrip { margin: 4px 15px 0 auto; }
.hscroll { display: flex; align-items: center; width: 728px; height: 17px; padding: 0 4px; border-radius: 8px; background: #f8f8f8; }
.hscroll i { width: 669px; height: 9px; margin: 0 auto 0 5px; border-radius: 5px; background: #6e6e6e; }

.status { flex: none; display: flex; align-items: center; height: 21px; padding: 0 19px 0 11px; background: #f5f5f5; }
.mac { margin-left: 20px; }
.stats { display: flex; gap: 18px; margin: 0 19px 0 auto; }
.view { width: 40px; height: 21px; }
.view.on { background: #dedede; }
.z { width: 17px; font-size: 14px; }
.status input { width: 102px; height: 16px; appearance: none; background: linear-gradient(#777, #777) center / 100% 1px no-repeat; }
.status input::-webkit-slider-thumb { appearance: none; width: 5px; height: 12px; background: #555; }
.pc { width: 33px; margin-left: 9px; }

.dialog { position: absolute; left: 447px; top: 338px; width: 289px; height: 306px; margin: 0; border: 1px solid #6e6e6e; background: #f0f0f0; color: #111; box-shadow: 2px 4px 14px rgba(0, 0, 0, .4); }
.dt { display: flex; align-items: center; height: 30px; padding: 0 1px 2px 8px; background: #fff; font-family: "Noto Sans CJK JP", sans-serif; font-size: 11px; }
.dt span { margin-right: auto; }
.dt button { width: 45px; font-size: 13px; }
.db { display: flex; flex-direction: column; padding: 8px 6px 0; }
.list { display: flex; justify-content: flex-end; height: 154px; margin: 4px 0; padding: 1px; border: 1px solid #828790; background: #fff; }
.ls { display: flex; flex-direction: column; align-items: center; justify-content: space-between; width: 17px; padding: 6px 0; background: #f0f0f0; }
.ref { display: flex; align-items: center; height: 23px; margin-top: 4px; padding-left: 2px; border: 1px solid #abadb3; background: #fff; }
.ref i { width: 1px; height: 15px; background: #000; }
.ref input { flex: 1; }
.acts { display: flex; align-items: center; gap: 10px; margin-top: 13px; padding-right: 1px; }
.acts button { width: 74px; height: 25px; border: 1px solid #adadad; background: #e1e1e1; }
.acts .special { width: 90px; margin-right: auto; }
.acts .ok { border: 2px solid #0078d7; }

.mark { position: absolute; color: #f00; font: 44px/56px "Noto Sans CJK JP", sans-serif; font-feature-settings: "hwid"; -webkit-text-stroke: 7px #fff; paint-order: stroke fill; filter: drop-shadow(3px 3px 3px rgba(0, 0, 0, .55)); white-space: pre; }
.mark span { font-feature-settings: normal; }
.m3 { left: 380px; top: 253px; }
.m4 { left: 481px; top: 644px; }
.ring { position: absolute; left: 449px; top: 603px; width: 100px; height: 38px; border: 7px solid #f00; border-radius: 9px; box-shadow: inset 1px 2px 5px rgba(0, 0, 0, .6); pointer-events: none; }
</style>
